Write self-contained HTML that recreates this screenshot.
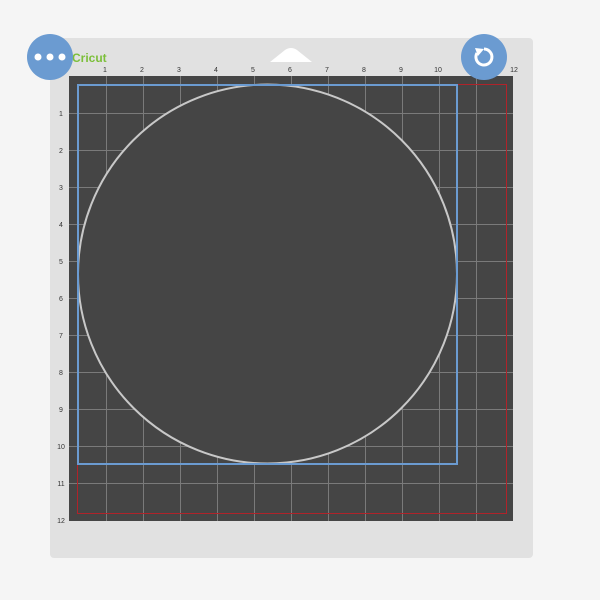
<!DOCTYPE html>
<html><head><style>
body{margin:0;width:600px;height:600px;background:#f5f5f5;position:relative;overflow:hidden;font-family:"Liberation Sans",sans-serif}
</style></head><body>
<div style="position:absolute;left:50px;top:38px;width:483px;height:520px;background:#e1e1e1;border-radius:4px"></div>
<svg width="600" height="600" style="position:absolute;left:0;top:0">
<path d="M270 62 L285 50 Q291 46 297 50 L312 62 Z" fill="#fff"/>
<rect x="69" y="76" width="444" height="445" fill="#454545"/>
<g stroke="#7a7a7a" stroke-width="1">
<line x1="106.5" y1="76" x2="106.5" y2="521"/><line x1="143.5" y1="76" x2="143.5" y2="521"/><line x1="180.5" y1="76" x2="180.5" y2="521"/><line x1="217.5" y1="76" x2="217.5" y2="521"/><line x1="254.5" y1="76" x2="254.5" y2="521"/><line x1="291.5" y1="76" x2="291.5" y2="521"/><line x1="328.5" y1="76" x2="328.5" y2="521"/><line x1="365.5" y1="76" x2="365.5" y2="521"/><line x1="402.5" y1="76" x2="402.5" y2="521"/><line x1="439.5" y1="76" x2="439.5" y2="521"/><line x1="476.5" y1="76" x2="476.5" y2="521"/>
<line y1="113.5" x1="69" y2="113.5" x2="513"/><line y1="150.5" x1="69" y2="150.5" x2="513"/><line y1="187.5" x1="69" y2="187.5" x2="513"/><line y1="224.5" x1="69" y2="224.5" x2="513"/><line y1="261.5" x1="69" y2="261.5" x2="513"/><line y1="298.5" x1="69" y2="298.5" x2="513"/><line y1="335.5" x1="69" y2="335.5" x2="513"/><line y1="372.5" x1="69" y2="372.5" x2="513"/><line y1="409.5" x1="69" y2="409.5" x2="513"/><line y1="446.5" x1="69" y2="446.5" x2="513"/><line y1="483.5" x1="69" y2="483.5" x2="513"/>
</g>
<rect x="77.5" y="84.5" width="429" height="429" fill="none" stroke="#b0232a" stroke-width="1"/>
<circle cx="267.5" cy="274" r="189.5" fill="#454545" stroke="#c8c8c8" stroke-width="2"/>
<rect x="78" y="85" width="379" height="379" fill="none" stroke="#6b9bd1" stroke-width="2"/>
<g font-size="7" fill="#333" text-anchor="middle">
<text x="105" y="72">1</text><text x="142" y="72">2</text><text x="179" y="72">3</text><text x="216" y="72">4</text><text x="253" y="72">5</text><text x="290" y="72">6</text><text x="327" y="72">7</text><text x="364" y="72">8</text><text x="401" y="72">9</text><text x="438" y="72">10</text><text x="514" y="72">12</text>
<text x="61" y="116">1</text><text x="61" y="153">2</text><text x="61" y="190">3</text><text x="61" y="227">4</text><text x="61" y="264">5</text><text x="61" y="301">6</text><text x="61" y="338">7</text><text x="61" y="375">8</text><text x="61" y="412">9</text><text x="61" y="449">10</text><text x="61" y="486">11</text><text x="61" y="523">12</text>
</g>
<text x="72" y="62" font-size="12" font-weight="bold" fill="#7cbf3a">Cricut</text>
<circle cx="50" cy="57" r="23" fill="#6b9bd1"/>
<circle cx="38" cy="57" r="3.5" fill="#fff"/><circle cx="50" cy="57" r="3.5" fill="#fff"/><circle cx="62" cy="57" r="3.5" fill="#fff"/>
<circle cx="484" cy="57" r="23" fill="#6b9bd1"/>
<path d="M477 53 A8 8 0 1 0 484 49" fill="none" stroke="#fff" stroke-width="3"/>
<path d="M475 48 L484 49 L478 56 Z" fill="#fff"/>
</svg>
</body></html>
